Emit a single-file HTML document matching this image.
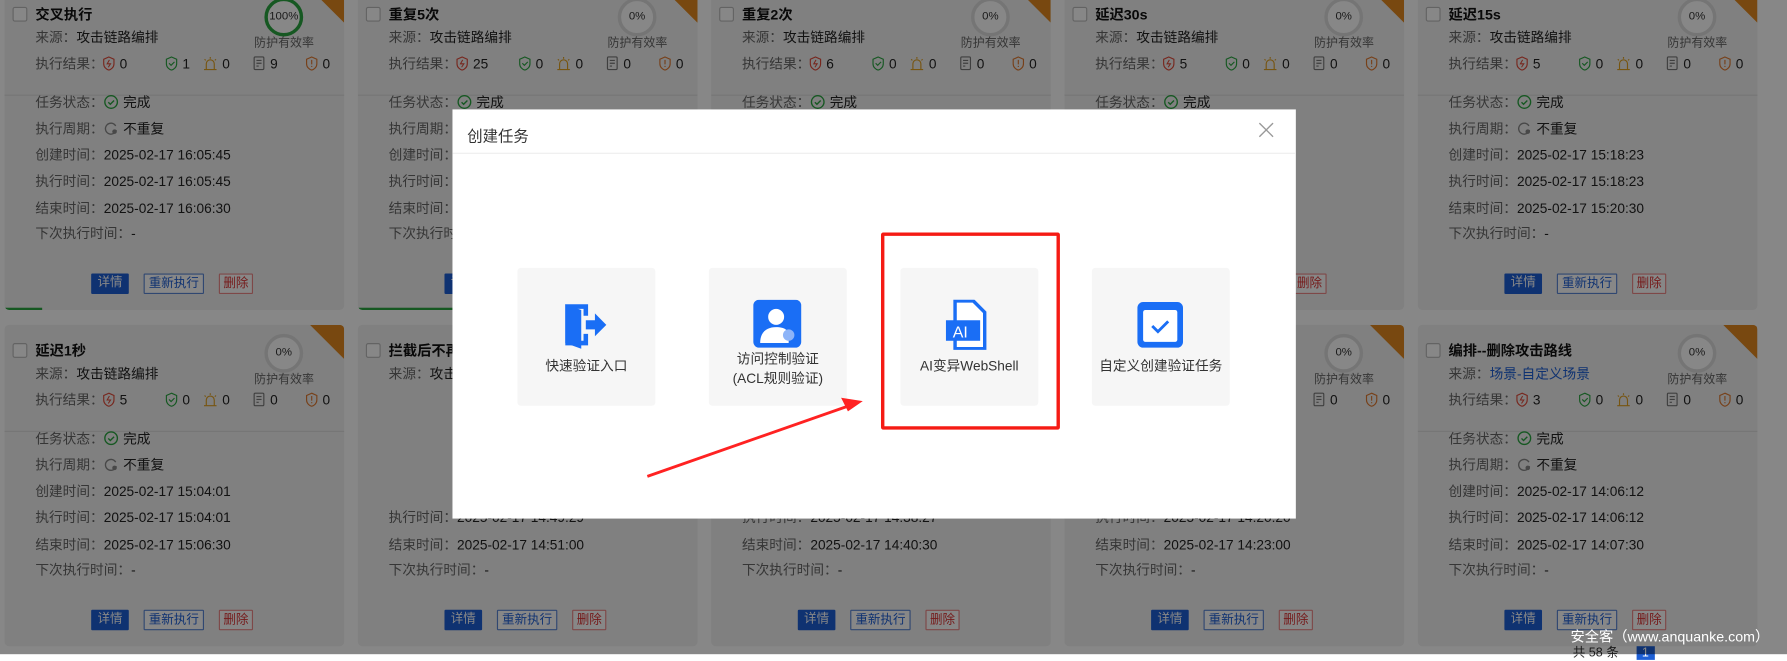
<!DOCTYPE html>
<html><head><meta charset="utf-8">
<style>
*{margin:0;padding:0;box-sizing:border-box}
html,body{width:1787px;height:654px;overflow:hidden;background:#fff;font-family:"Liberation Sans","Noto Sans CJK SC",sans-serif}
#s{position:absolute;left:0;top:0;width:1568px;height:574px;transform:scale(1.1397);transform-origin:0 0}
.c{position:absolute;width:298px;height:282px;background:#f1f1f1;border-radius:4px;overflow:hidden;font-size:12px;color:#222}
.c>*{position:absolute;white-space:nowrap;line-height:18px}
.cb{left:7px;top:16px;width:13px;height:13px;border:1px solid #bbb;background:#fff;border-radius:2px}
.t{left:27px;top:14px;font-weight:bold;font-size:12.5px;color:#111}
.lb{color:#666}
.r1{left:27px;top:34px}.r2{left:27px;top:57px;width:270px;height:18px}
.dv{left:0;top:93px;width:298px;height:1px;background:#ddd}
.a{left:27px;top:91px}.b{left:27px;top:114px}.d{left:27px;top:137px}.e{left:27px;top:160px}.f{left:27px;top:184px}.g{left:27px;top:206px}
.ic{display:inline-block;vertical-align:-2px;margin-right:4px}
.r2 span{position:absolute;top:0}
.btn{top:250px;height:18px;line-height:16px;font-size:11px;text-align:center;border-radius:1px}
.b1{left:76px;width:33px;background:#1d5fd6;color:#fff}
.b2{left:122px;width:53px;border:1px solid #5b86d6;color:#1d5fd6;background:#fff}
.b3{left:188px;width:30px;border:1px solid #e88;color:#d33;background:#fff}
.gg{left:228px;top:8px;width:34px;height:34px;border-radius:50%;border:3px solid #ddd;background:#fff;text-align:center;line-height:28px;font-size:10px;color:#333}
.gg.full{border-color:#2aa640}
.pe{left:219px;top:39px;font-size:10.5px;color:#666}
.rb{right:0;top:0;width:30px;height:30px;background:#e2891f;clip-path:polygon(0 0,100% 0,100% 100%)}
#ov{position:absolute;left:0;top:0;width:1568px;height:574px;background:rgba(0,0,0,0.47)}
#m{position:absolute;left:397px;top:96px;width:740px;height:359px;background:#fff}
#m .h{position:absolute;left:13px;top:12px;font-size:13.5px;color:#333}
#m .x{position:absolute;left:707px;top:11px}
#m .ln{position:absolute;left:0;top:38px;width:740px;height:1px;background:#eee}
.tl{position:absolute;top:139px;width:121px;height:121px;background:#f6f6f6;border-radius:3px;text-align:center;font-size:12px;color:#333}
.tl svg{position:absolute;left:38px;top:28px}
.tl p{position:absolute;left:0;width:121px;top:80px;line-height:17px}
#rd{position:absolute;left:773px;top:204px;width:157px;height:173px;border:3px solid #f51b14;border-radius:2px}
#wm{position:absolute;left:1378px;top:548px;color:#fff;font-size:12.5px}
#pg{position:absolute;left:1380px;top:564px;font-size:11px;color:#333}
</style></head><body>
<svg width="0" height="0" style="position:absolute">
<defs>
<symbol id="sr" viewBox="0 0 11 13"><path d="M5.5 1L10 3v4c0 3-2.5 5-4.5 5.5C3.5 12 1 10 1 7V3z" fill="none" stroke="#e04a3a"/><path d="M6 3.5L4 7h3l-2 3" fill="none" stroke="#e04a3a" stroke-width=".9"/></symbol>
<symbol id="sg" viewBox="0 0 11 13"><path d="M5.5 1L10 3v4c0 3-2.5 5-4.5 5.5C3.5 12 1 10 1 7V3z" fill="none" stroke="#2aa640"/><path d="M3.3 6.5l1.8 1.8 3-3" fill="none" stroke="#2aa640"/></symbol>
<symbol id="sy" viewBox="0 0 13 13"><path d="M3 12V7a3.5 3.5 0 017 0v5M1 12h11M6.5 1v1.5M1.5 3l1 1M11.5 3l-1 1" fill="none" stroke="#e0a020"/></symbol>
<symbol id="sd" viewBox="0 0 11 13"><rect x="1" y="1" width="8.5" height="11" rx="1" fill="none" stroke="#777"/><path d="M3 4h4.5M3 6.5h4.5M3 9h2" stroke="#777"/></symbol>
<symbol id="so" viewBox="0 0 11 13"><path d="M5.5 1L10 3v4c0 3-2.5 5-4.5 5.5C3.5 12 1 10 1 7V3z" fill="none" stroke="#e07a30"/><path d="M5.5 3.5v4M5.5 8.8v1" stroke="#e07a30"/></symbol>
<symbol id="ok" viewBox="0 0 13 13"><circle cx="6.5" cy="6.5" r="5.5" fill="none" stroke="#2aa640" stroke-width="1.2"/><path d="M4 6.7l1.8 1.8 3.3-3.3" fill="none" stroke="#2aa640" stroke-width="1.2"/></symbol>
<symbol id="cy" viewBox="0 0 13 13"><path d="M10.5 4.5A4.8 4.8 0 1 0 11 8" fill="none" stroke="#888" stroke-width="1.2"/><circle cx="9.5" cy="9.5" r="2" fill="#888"/></symbol>
</defs></svg>
<div id="s">
<!-- row 1 -->
<div class="c" style="left:4px;top:-10px">
<div class="cb"></div><div class="t">交叉执行</div>
<div class="gg full">100%</div><div class="pe">防护有效率</div><div class="rb"></div>
<div class="r1"><span class="lb">来源：</span>攻击链路编排</div>
<div class="r2"><span class="lb" style="left:0">执行结果：</span><span style="left:59px"><svg class="ic" width="11" height="13"><use href="#sr"/></svg>0</span><span style="left:114px"><svg class="ic" width="11" height="13"><use href="#sg"/></svg>1</span><span style="left:147px"><svg class="ic" width="13" height="13"><use href="#sy"/></svg>0</span><span style="left:191px"><svg class="ic" width="11" height="13"><use href="#sd"/></svg>9</span><span style="left:237px"><svg class="ic" width="11" height="13"><use href="#so"/></svg>0</span></div>
<div class="dv"></div>
<div class="a"><span class="lb">任务状态：</span><svg class="ic" width="13" height="13"><use href="#ok"/></svg>完成</div>
<div class="b"><span class="lb">执行周期：</span><svg class="ic" width="13" height="13"><use href="#cy"/></svg>不重复</div>
<div class="d"><span class="lb">创建时间：</span>2025-02-17 16:05:45</div>
<div class="e"><span class="lb">执行时间：</span>2025-02-17 16:05:45</div>
<div class="f"><span class="lb">结束时间：</span>2025-02-17 16:06:30</div>
<div class="g"><span class="lb">下次执行时间：</span>-</div>
<div class="btn b1">详情</div><div class="btn b2">重新执行</div><div class="btn b3">删除</div>
<div style="left:0;top:280px;width:33px;height:2px;background:#2aa640"></div>
</div>
<div class="c" style="left:314px;top:-10px">
<div class="cb"></div><div class="t">重复5次</div><div class="gg">0%</div><div class="pe">防护有效率</div><div class="rb"></div>
<div class="r1"><span class="lb">来源：</span>攻击链路编排</div>
<div class="r2"><span class="lb" style="left:0">执行结果：</span><span style="left:59px"><svg class="ic" width="11" height="13"><use href="#sr"/></svg>25</span><span style="left:114px"><svg class="ic" width="11" height="13"><use href="#sg"/></svg>0</span><span style="left:147px"><svg class="ic" width="13" height="13"><use href="#sy"/></svg>0</span><span style="left:191px"><svg class="ic" width="11" height="13"><use href="#sd"/></svg>0</span><span style="left:237px"><svg class="ic" width="11" height="13"><use href="#so"/></svg>0</span></div>
<div class="dv"></div>
<div class="a"><span class="lb">任务状态：</span><svg class="ic" width="13" height="13"><use href="#ok"/></svg>完成</div>
<div class="b"><span class="lb">执行周期：</span></div><div class="d"><span class="lb">创建时间：</span></div><div class="e"><span class="lb">执行时间：</span></div><div class="f"><span class="lb">结束时间：</span></div><div class="g"><span class="lb">下次执行时间：</span></div>
<div class="btn b1">详情</div>
<div style="left:0;top:280px;width:90px;height:2px;background:#2aa640"></div>
</div>
<div class="c" style="left:624px;top:-10px">
<div class="cb"></div><div class="t">重复2次</div><div class="gg">0%</div><div class="pe">防护有效率</div><div class="rb"></div>
<div class="r1"><span class="lb">来源：</span>攻击链路编排</div>
<div class="r2"><span class="lb" style="left:0">执行结果：</span><span style="left:59px"><svg class="ic" width="11" height="13"><use href="#sr"/></svg>6</span><span style="left:114px"><svg class="ic" width="11" height="13"><use href="#sg"/></svg>0</span><span style="left:147px"><svg class="ic" width="13" height="13"><use href="#sy"/></svg>0</span><span style="left:191px"><svg class="ic" width="11" height="13"><use href="#sd"/></svg>0</span><span style="left:237px"><svg class="ic" width="11" height="13"><use href="#so"/></svg>0</span></div>
<div class="dv"></div><div class="a"><span class="lb">任务状态：</span><svg class="ic" width="13" height="13"><use href="#ok"/></svg>完成</div>
</div>
<div class="c" style="left:934px;top:-10px">
<div class="cb"></div><div class="t">延迟30s</div><div class="gg">0%</div><div class="pe">防护有效率</div><div class="rb"></div>
<div class="r1"><span class="lb">来源：</span>攻击链路编排</div>
<div class="r2"><span class="lb" style="left:0">执行结果：</span><span style="left:59px"><svg class="ic" width="11" height="13"><use href="#sr"/></svg>5</span><span style="left:114px"><svg class="ic" width="11" height="13"><use href="#sg"/></svg>0</span><span style="left:147px"><svg class="ic" width="13" height="13"><use href="#sy"/></svg>0</span><span style="left:191px"><svg class="ic" width="11" height="13"><use href="#sd"/></svg>0</span><span style="left:237px"><svg class="ic" width="11" height="13"><use href="#so"/></svg>0</span></div>
<div class="dv"></div><div class="a"><span class="lb">任务状态：</span><svg class="ic" width="13" height="13"><use href="#ok"/></svg>完成</div>
<div class="btn b3" style="left:200px">删除</div>
</div>
<div class="c" style="left:1244px;top:-10px">
<div class="cb"></div><div class="t">延迟15s</div><div class="gg">0%</div><div class="pe">防护有效率</div><div class="rb"></div>
<div class="r1"><span class="lb">来源：</span>攻击链路编排</div>
<div class="r2"><span class="lb" style="left:0">执行结果：</span><span style="left:59px"><svg class="ic" width="11" height="13"><use href="#sr"/></svg>5</span><span style="left:114px"><svg class="ic" width="11" height="13"><use href="#sg"/></svg>0</span><span style="left:147px"><svg class="ic" width="13" height="13"><use href="#sy"/></svg>0</span><span style="left:191px"><svg class="ic" width="11" height="13"><use href="#sd"/></svg>0</span><span style="left:237px"><svg class="ic" width="11" height="13"><use href="#so"/></svg>0</span></div>
<div class="dv"></div>
<div class="a"><span class="lb">任务状态：</span><svg class="ic" width="13" height="13"><use href="#ok"/></svg>完成</div>
<div class="b"><span class="lb">执行周期：</span><svg class="ic" width="13" height="13"><use href="#cy"/></svg>不重复</div>
<div class="d"><span class="lb">创建时间：</span>2025-02-17 15:18:23</div>
<div class="e"><span class="lb">执行时间：</span>2025-02-17 15:18:23</div>
<div class="f"><span class="lb">结束时间：</span>2025-02-17 15:20:30</div>
<div class="g"><span class="lb">下次执行时间：</span>-</div>
<div class="btn b1">详情</div><div class="btn b2">重新执行</div><div class="btn b3">删除</div>
</div>
<!-- row 2 -->
<div class="c" style="left:4px;top:285px">
<div class="cb"></div><div class="t">延迟1秒</div><div class="gg">0%</div><div class="pe">防护有效率</div><div class="rb"></div>
<div class="r1"><span class="lb">来源：</span>攻击链路编排</div>
<div class="r2"><span class="lb" style="left:0">执行结果：</span><span style="left:59px"><svg class="ic" width="11" height="13"><use href="#sr"/></svg>5</span><span style="left:114px"><svg class="ic" width="11" height="13"><use href="#sg"/></svg>0</span><span style="left:147px"><svg class="ic" width="13" height="13"><use href="#sy"/></svg>0</span><span style="left:191px"><svg class="ic" width="11" height="13"><use href="#sd"/></svg>0</span><span style="left:237px"><svg class="ic" width="11" height="13"><use href="#so"/></svg>0</span></div>
<div class="dv"></div>
<div class="a"><span class="lb">任务状态：</span><svg class="ic" width="13" height="13"><use href="#ok"/></svg>完成</div>
<div class="b"><span class="lb">执行周期：</span><svg class="ic" width="13" height="13"><use href="#cy"/></svg>不重复</div>
<div class="d"><span class="lb">创建时间：</span>2025-02-17 15:04:01</div>
<div class="e"><span class="lb">执行时间：</span>2025-02-17 15:04:01</div>
<div class="f"><span class="lb">结束时间：</span>2025-02-17 15:06:30</div>
<div class="g"><span class="lb">下次执行时间：</span>-</div>
<div class="btn b1">详情</div><div class="btn b2">重新执行</div><div class="btn b3">删除</div>
</div>
<div class="c" style="left:314px;top:285px">
<div class="cb"></div><div class="t">拦截后不再执行</div>
<div class="r1"><span class="lb">来源：</span>攻击链路编排</div>
<div class="e"><span class="lb">执行时间：</span>2025-02-17 14:49:29</div>
<div class="f"><span class="lb">结束时间：</span>2025-02-17 14:51:00</div>
<div class="g"><span class="lb">下次执行时间：</span>-</div>
<div class="btn b1">详情</div><div class="btn b2">重新执行</div><div class="btn b3">删除</div>
</div>
<div class="c" style="left:624px;top:285px">
<div class="e"><span class="lb">执行时间：</span>2025-02-17 14:38:27</div>
<div class="f"><span class="lb">结束时间：</span>2025-02-17 14:40:30</div>
<div class="g"><span class="lb">下次执行时间：</span>-</div>
<div class="btn b1">详情</div><div class="btn b2">重新执行</div><div class="btn b3">删除</div>
</div>
<div class="c" style="left:934px;top:285px">
<div class="gg">0%</div><div class="pe">防护有效率</div><div class="rb"></div>
<div class="r2"><span style="left:191px"><svg class="ic" width="11" height="13"><use href="#sd"/></svg>0</span><span style="left:237px"><svg class="ic" width="11" height="13"><use href="#so"/></svg>0</span></div>
<div class="e"><span class="lb">执行时间：</span>2025-02-17 14:20:20</div>
<div class="f"><span class="lb">结束时间：</span>2025-02-17 14:23:00</div>
<div class="g"><span class="lb">下次执行时间：</span>-</div>
<div class="btn b1">详情</div><div class="btn b2">重新执行</div><div class="btn b3">删除</div>
</div>
<div class="c" style="left:1244px;top:285px">
<div class="cb"></div><div class="t">编排--删除攻击路线</div><div class="gg">0%</div><div class="pe">防护有效率</div><div class="rb"></div>
<div class="r1"><span class="lb">来源：</span><span style="color:#1d5fd6">场景-自定义场景</span></div>
<div class="r2"><span class="lb" style="left:0">执行结果：</span><span style="left:59px"><svg class="ic" width="11" height="13"><use href="#sr"/></svg>3</span><span style="left:114px"><svg class="ic" width="11" height="13"><use href="#sg"/></svg>0</span><span style="left:147px"><svg class="ic" width="13" height="13"><use href="#sy"/></svg>0</span><span style="left:191px"><svg class="ic" width="11" height="13"><use href="#sd"/></svg>0</span><span style="left:237px"><svg class="ic" width="11" height="13"><use href="#so"/></svg>0</span></div>
<div class="dv"></div>
<div class="a"><span class="lb">任务状态：</span><svg class="ic" width="13" height="13"><use href="#ok"/></svg>完成</div>
<div class="b"><span class="lb">执行周期：</span><svg class="ic" width="13" height="13"><use href="#cy"/></svg>不重复</div>
<div class="d"><span class="lb">创建时间：</span>2025-02-17 14:06:12</div>
<div class="e"><span class="lb">执行时间：</span>2025-02-17 14:06:12</div>
<div class="f"><span class="lb">结束时间：</span>2025-02-17 14:07:30</div>
<div class="g"><span class="lb">下次执行时间：</span>-</div>
<div class="btn b1">详情</div><div class="btn b2">重新执行</div><div class="btn b3">删除</div>
</div>
<div id="pg">共 58 条 &nbsp;&nbsp;&nbsp; <span style="background:#1d5fd6;color:#fff;padding:0 5px">1</span></div>
<div id="ov"></div>
<div id="m">
<div class="h">创建任务</div>
<svg class="x" width="14" height="14" viewBox="0 0 14 14"><path d="M1 1l12 12M13 1L1 13" stroke="#999" stroke-width="1.2"/></svg>
<div class="ln"></div>
<div class="tl" style="left:57px"><svg width="44" height="44" viewBox="0 0 44 44"><path d="M4 4h20v10h-4V8H10v28h10v-6h4v10H4z" fill="#1a6ef5"/><path d="M4 4l14 5v34L4 38z" fill="#1a6ef5"/><path d="M22 18h8v-6l10 10-10 10v-6h-8z" fill="#1a6ef5"/></svg><p style="top:78px">快速验证入口</p></div>
<div class="tl" style="left:225px"><svg width="44" height="44" viewBox="0 0 44 44"><rect x="1" y="0" width="42" height="42" rx="5" fill="#1a6ef5"/><circle cx="21" cy="15" r="7" fill="#fff"/><path d="M7 38c0-10 6-14 14-14s10 3 11 6v8z" fill="#fff"/><circle cx="32" cy="31" r="5" fill="#8db4f8"/></svg><p style="top:72px">访问控制验证<br>(ACL规则验证)</p></div>
<div class="tl" style="left:393px"><svg width="44" height="44" viewBox="0 0 44 44"><path d="M10 1h16l10 10v32H10z" fill="#fff" stroke="#1a6ef5" stroke-width="3"/><rect x="2" y="18" width="30" height="18" fill="#1a6ef5"/><text x="8" y="33" font-size="14" fill="#fff" font-family="Liberation Sans">AI</text></svg><p style="top:78px">AI变异WebShell</p></div>
<div class="tl" style="left:561px"><svg width="44" height="44" viewBox="0 0 44 44"><rect x="2" y="2" width="40" height="40" rx="5" fill="#1a6ef5"/><rect x="7" y="9" width="30" height="28" rx="2" fill="#fff"/><path d="M15 23l5 5 9-9" fill="none" stroke="#1a6ef5" stroke-width="2.5"/></svg><p style="top:78px">自定义创建验证任务</p></div>
</div>
<div id="rd"></div>
<svg style="position:absolute;left:0;top:0" width="1568" height="574"><path d="M568 418L745 356" stroke="#f22" stroke-width="2.5"/><path d="M757 352L738 349l6 12z" fill="#f22"/></svg>
<div id="wm">安全客（www.anquanke.com）</div>
</div>
</body></html>
